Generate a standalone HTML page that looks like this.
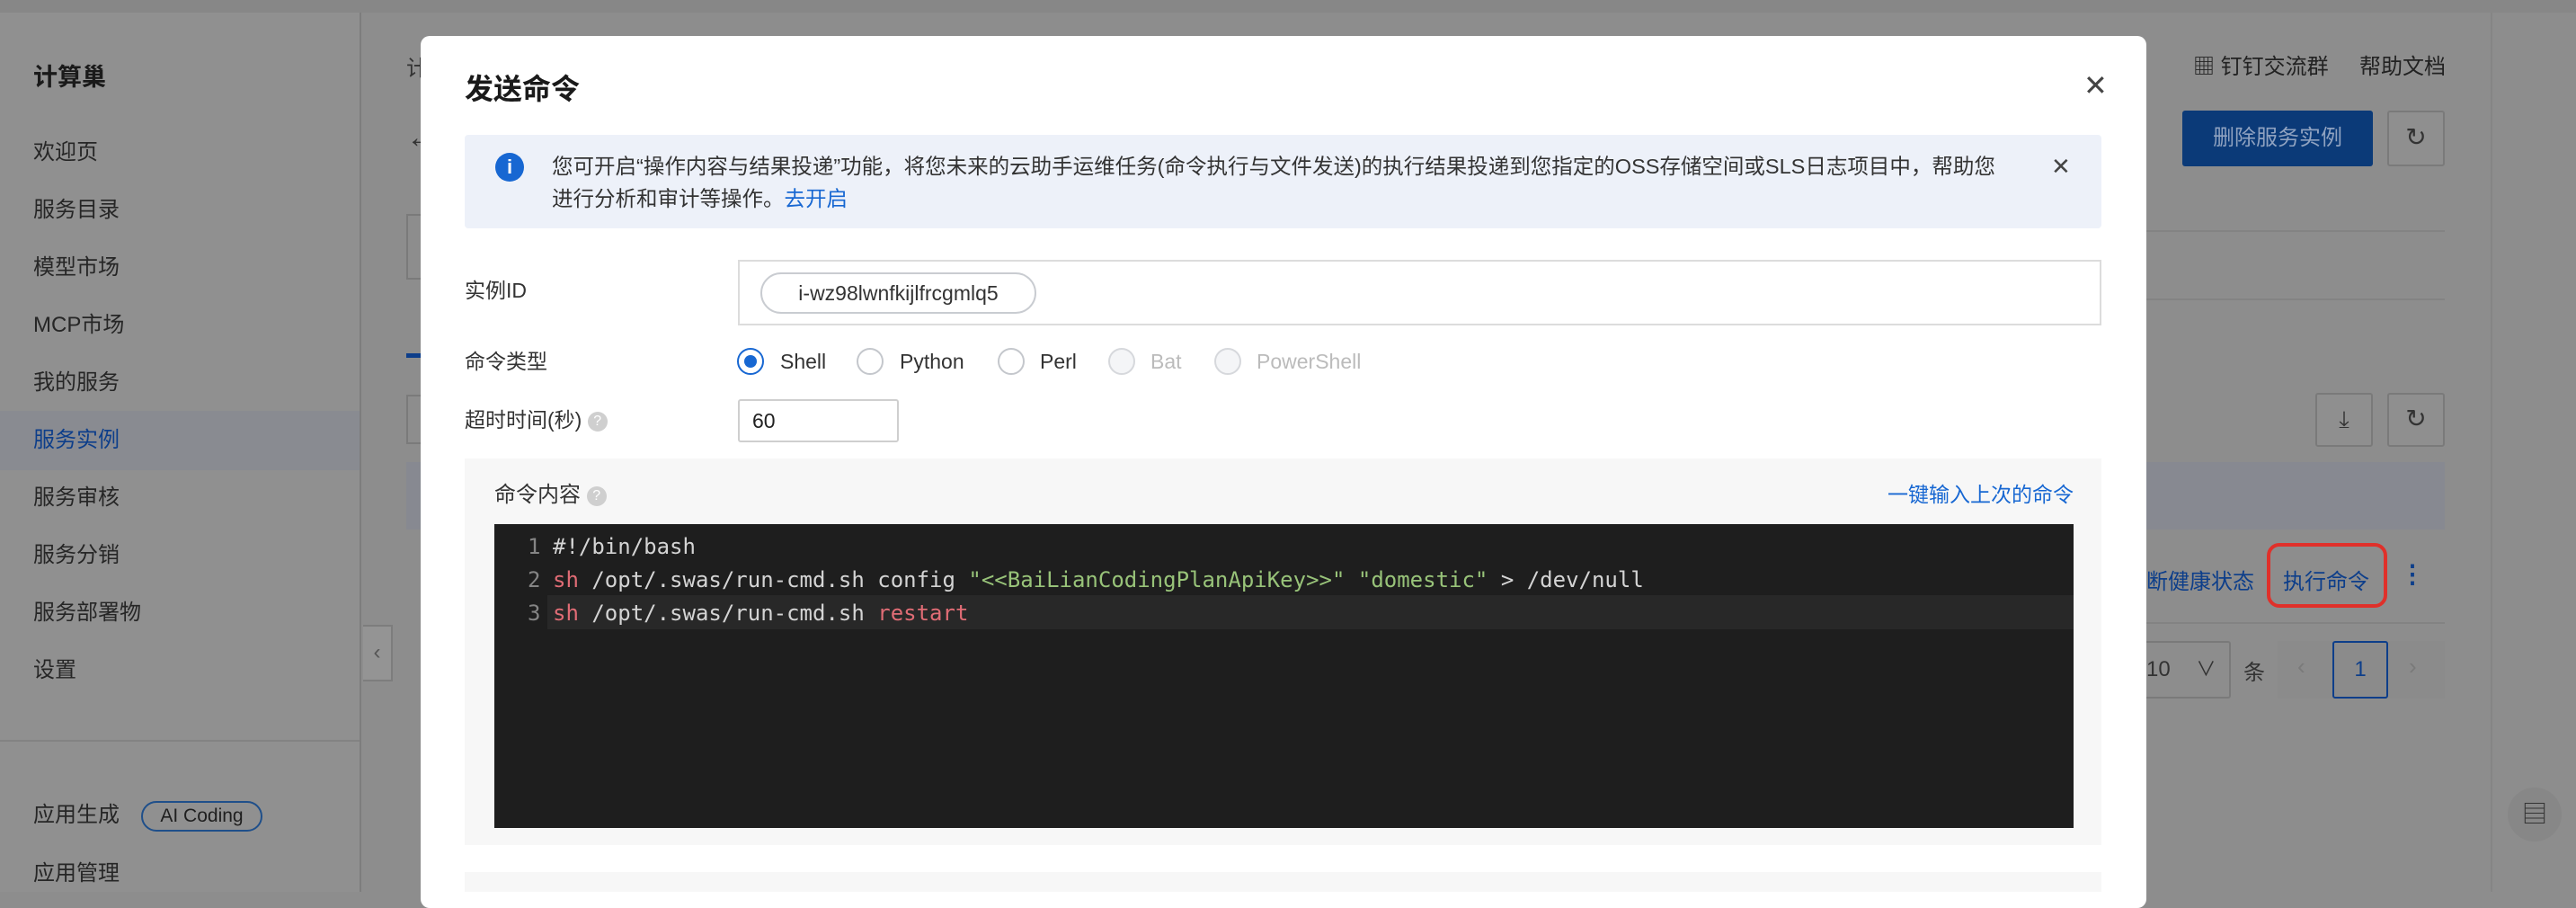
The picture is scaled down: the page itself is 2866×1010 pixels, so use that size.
<!DOCTYPE html>
<html><head><meta charset="utf-8"><style>
*{box-sizing:border-box;margin:0;padding:0}
body{width:2866px;height:992px;overflow:hidden;position:relative;background:#8d8d8d;font-family:"Liberation Sans","Noto Sans CJK SC",sans-serif;color:#1f1f1f}
.a{position:absolute}
.si{position:absolute;left:37px;font-size:24px;color:#262626;line-height:30px}
.lbl{position:absolute;font-size:23px;color:#333;line-height:30px}
.radio{position:absolute;width:30px;height:30px;border-radius:50%;border:2px solid #c4c7cc;background:#fff}
.rt{position:absolute;font-size:23px;line-height:30px;color:#333}
.code{position:absolute;font-family:"DejaVu Sans Mono","Liberation Mono",monospace;font-size:24px;line-height:37px;white-space:pre;color:#d4d4d4}
.btn{position:absolute;border:2px solid #7a7a7a;border-radius:3px;background:#8f8f8f;color:#333;text-align:center}
</style></head><body>
<div class="a" style="left:0;top:0;width:2866px;height:14px;background:#878787"></div>
<div class="a" style="left:0;top:14px;width:402px;height:978px;background:#909090;border-right:2px solid #7d7d7d"></div>
<div class="si" style="top:71px;font-size:27px;font-weight:bold;color:#1a1a1a">计算巢</div>
<div class="si" style="top:155px">欢迎页</div>
<div class="si" style="top:219px">服务目录</div>
<div class="si" style="top:283px">模型市场</div>
<div class="si" style="top:347px">MCP市场</div>
<div class="si" style="top:411px">我的服务</div>
<div class="a" style="left:0;top:457px;width:400px;height:66px;background:#898b91"></div>
<div class="si" style="top:475px;color:#0d3e8a">服务实例</div>
<div class="si" style="top:539px">服务审核</div>
<div class="si" style="top:603px">服务分销</div>
<div class="si" style="top:667px">服务部署物</div>
<div class="si" style="top:731px">设置</div>
<div class="a" style="left:0;top:823px;width:400px;height:2px;background:#838383"></div>
<div class="si" style="top:892px">应用生成</div>
<div class="a" style="left:157px;top:891px;width:135px;height:34px;border:2px solid #1f4f8a;border-radius:17px;font-size:21px;line-height:30px;text-align:center;color:#1f1f1f">AI Coding</div>
<div class="si" style="top:957px">应用管理</div>
<div class="a" style="left:404px;top:695px;width:33px;height:63px;background:#949494;border:2px solid #7d7d7d;border-left:none;font-size:24px;line-height:58px;text-align:center;color:#555">‹</div>

<div class="a" style="left:452px;top:56px;font-size:24px;color:#333">计</div>
<div class="a" style="left:452px;top:134px;font-size:34px;color:#333">←</div>
<div class="a" style="left:452px;top:238px;width:30px;height:73px;border:2px solid #7a7a7a;border-right:none"></div>
<div class="a" style="left:452px;top:393px;width:20px;height:5px;background:#0d3e8a"></div>
<div class="a" style="left:452px;top:439px;width:30px;height:55px;border:2px solid #7a7a7a;border-right:none"></div>
<div class="a" style="left:452px;top:514px;width:30px;height:75px;background:#878991"></div>

<!-- right background -->
<div class="a" style="left:2440px;top:54px;font-size:24px;color:#222">▦ 钉钉交流群</div>
<div class="a" style="left:2625px;top:54px;font-size:24px;color:#222">帮助文档</div>
<div class="a" style="left:2428px;top:123px;width:212px;height:62px;background:#0b3a78;border-radius:3px;color:#8fa2c0;font-size:24px;line-height:62px;text-align:center">删除服务实例</div>
<div class="btn" style="left:2656px;top:123px;width:64px;height:62px;font-size:28px;line-height:56px">↻</div>
<div class="a" style="left:2388px;top:256px;width:332px;height:2px;background:#838383"></div>
<div class="a" style="left:2388px;top:332px;width:332px;height:2px;background:#838383"></div>
<div class="btn" style="left:2576px;top:437px;width:64px;height:60px;font-size:26px;line-height:54px">⤓</div>
<div class="btn" style="left:2656px;top:437px;width:64px;height:60px;font-size:28px;line-height:54px">↻</div>
<div class="a" style="left:2388px;top:514px;width:332px;height:75px;background:#878991"></div>
<div class="a" style="left:2388px;top:627px;font-size:24px;color:#0d3e8a">断健康状态</div>
<div class="a" style="left:2522px;top:604px;width:134px;height:72px;border:4px solid #e0302a;border-radius:14px"></div>
<div class="a" style="left:2540px;top:627px;font-size:24px;color:#0d3e8a">执行命令</div>
<div class="a" style="left:2670px;top:622px;font-size:28px;font-weight:bold;color:#0d3e8a">⋮</div>
<div class="a" style="left:2388px;top:692px;width:332px;height:2px;background:#838383"></div>
<div class="a" style="left:2388px;top:713px;width:94px;height:64px;border:2px solid #7a7a7a;border-left:none;border-radius:0 3px 3px 0;font-size:24px;line-height:60px;color:#333">10 <span style="margin-left:22px;font-size:22px">∨</span></div>
<div class="a" style="left:2496px;top:728px;font-size:24px;color:#333">条</div>
<div class="a" style="left:2534px;top:713px;width:186px;height:64px;background:#8b8b8b"></div>
<div class="a" style="left:2556px;top:726px;font-size:26px;color:#7a7a7a">‹</div>
<div class="a" style="left:2595px;top:713px;width:62px;height:64px;border:2px solid #0d3e8a;border-radius:3px;font-size:24px;line-height:60px;text-align:center;color:#0d3e8a">1</div>
<div class="a" style="left:2680px;top:726px;font-size:26px;color:#7a7a7a">›</div>
<div class="a" style="left:2771px;top:14px;width:2px;height:978px;background:#858585"></div>
<div class="a" style="left:2790px;top:876px;width:60px;height:60px;border-radius:30px;background:#878787;font-size:28px;line-height:60px;text-align:center;color:#333">▤</div>

<!-- modal -->
<div class="a" style="left:468px;top:40px;width:1920px;height:970px;background:#fff;border-radius:10px"></div>
<div class="a" style="left:517px;top:74px;font-size:32px;font-weight:bold;color:#1a1a1a">发送命令</div>
<div class="a" style="left:2318px;top:78px;font-size:32px;line-height:34px;color:#444">✕</div>

<div class="a" style="left:517px;top:150px;width:1821px;height:104px;background:#edf1f9;border-radius:4px"></div>
<div class="a" style="left:551px;top:170px;width:32px;height:32px;border-radius:50%;background:#1767d2;color:#fff;font-size:22px;font-weight:bold;line-height:32px;text-align:center">i</div>
<div class="a" style="left:614px;top:167px;width:1680px;font-size:23.5px;line-height:36px;color:#333">您可开启“操作内容与结果投递”功能，将您未来的云助手运维任务(命令执行与文件发送)的执行结果投递到您指定的OSS存储空间或SLS日志项目中，帮助您<br>进行分析和审计等操作。<span style="color:#1767d2">去开启</span></div>
<div class="a" style="left:2282px;top:170px;font-size:26px;color:#444">✕</div>

<div class="lbl" style="left:517px;top:308px">实例ID</div>
<div class="a" style="left:821px;top:289px;width:1517px;height:73px;border:2px solid #dcdcdc"></div>
<div class="a" style="left:846px;top:303px;width:307px;height:46px;border:2px solid #c9ccd1;border-radius:23px;font-size:23px;line-height:42px;text-align:center;color:#333">i-wz98lwnfkijlfrcgmlq5</div>

<div class="lbl" style="left:517px;top:387px">命令类型</div>
<div class="radio" style="left:820px;top:387px;border:2px solid #1767d2"><div style="margin:6px;width:14px;height:14px;border-radius:50%;background:#1767d2"></div></div>
<div class="rt" style="left:868px;top:387px">Shell</div>
<div class="radio" style="left:953px;top:387px"></div>
<div class="rt" style="left:1001px;top:387px">Python</div>
<div class="radio" style="left:1110px;top:387px"></div>
<div class="rt" style="left:1157px;top:387px">Perl</div>
<div class="radio" style="left:1233px;top:387px;background:#f4f5f7;border-color:#d6d8dc"></div>
<div class="rt" style="left:1280px;top:387px;color:#bbb">Bat</div>
<div class="radio" style="left:1351px;top:387px;background:#f4f5f7;border-color:#d6d8dc"></div>
<div class="rt" style="left:1398px;top:387px;color:#bbb">PowerShell</div>

<div class="lbl" style="left:517px;top:452px">超时时间(秒) <span style="display:inline-block;width:22px;height:22px;border-radius:50%;background:#cfcfcf;color:#fff;font-size:16px;line-height:22px;text-align:center;vertical-align:2px">?</span></div>
<div class="a" style="left:821px;top:444px;width:179px;height:48px;border:2px solid #cfcfcf;border-radius:3px;font-size:23px;line-height:44px;padding-left:14px;color:#222">60</div>

<div class="a" style="left:517px;top:510px;width:1821px;height:430px;background:#f7f7f7"></div>
<div class="a" style="left:550px;top:530px;font-size:24px;color:#333">命令内容 <span style="display:inline-block;width:22px;height:22px;border-radius:50%;background:#cfcfcf;color:#fff;font-size:16px;line-height:22px;text-align:center;vertical-align:2px">?</span></div>
<div class="a" style="left:2070px;top:531px;width:237px;text-align:right;font-size:23px;color:#1767d2">一键输入上次的命令</div>
<div class="a" style="left:550px;top:583px;width:1757px;height:338px;background:#1e1e1e"></div>
<div class="a" style="left:609px;top:662px;width:1698px;height:38px;background:#282828"></div>
<div class="code" style="left:587px;top:590px;color:#858585">1
2
3</div>
<div class="code" style="left:615px;top:590px">#!/bin/bash
<span style="color:#e06c75">sh</span> /opt/.swas/run-cmd.sh config <span style="color:#98c379">"&lt;&lt;BaiLianCodingPlanApiKey&gt;&gt;"</span> <span style="color:#98c379">"domestic"</span> &gt; /dev/null
<span style="color:#e06c75">sh</span> /opt/.swas/run-cmd.sh <span style="color:#e06c75">restart</span></div>
<div class="a" style="left:517px;top:970px;width:1821px;height:22px;background:#f7f7f7"></div>
</body></html>
